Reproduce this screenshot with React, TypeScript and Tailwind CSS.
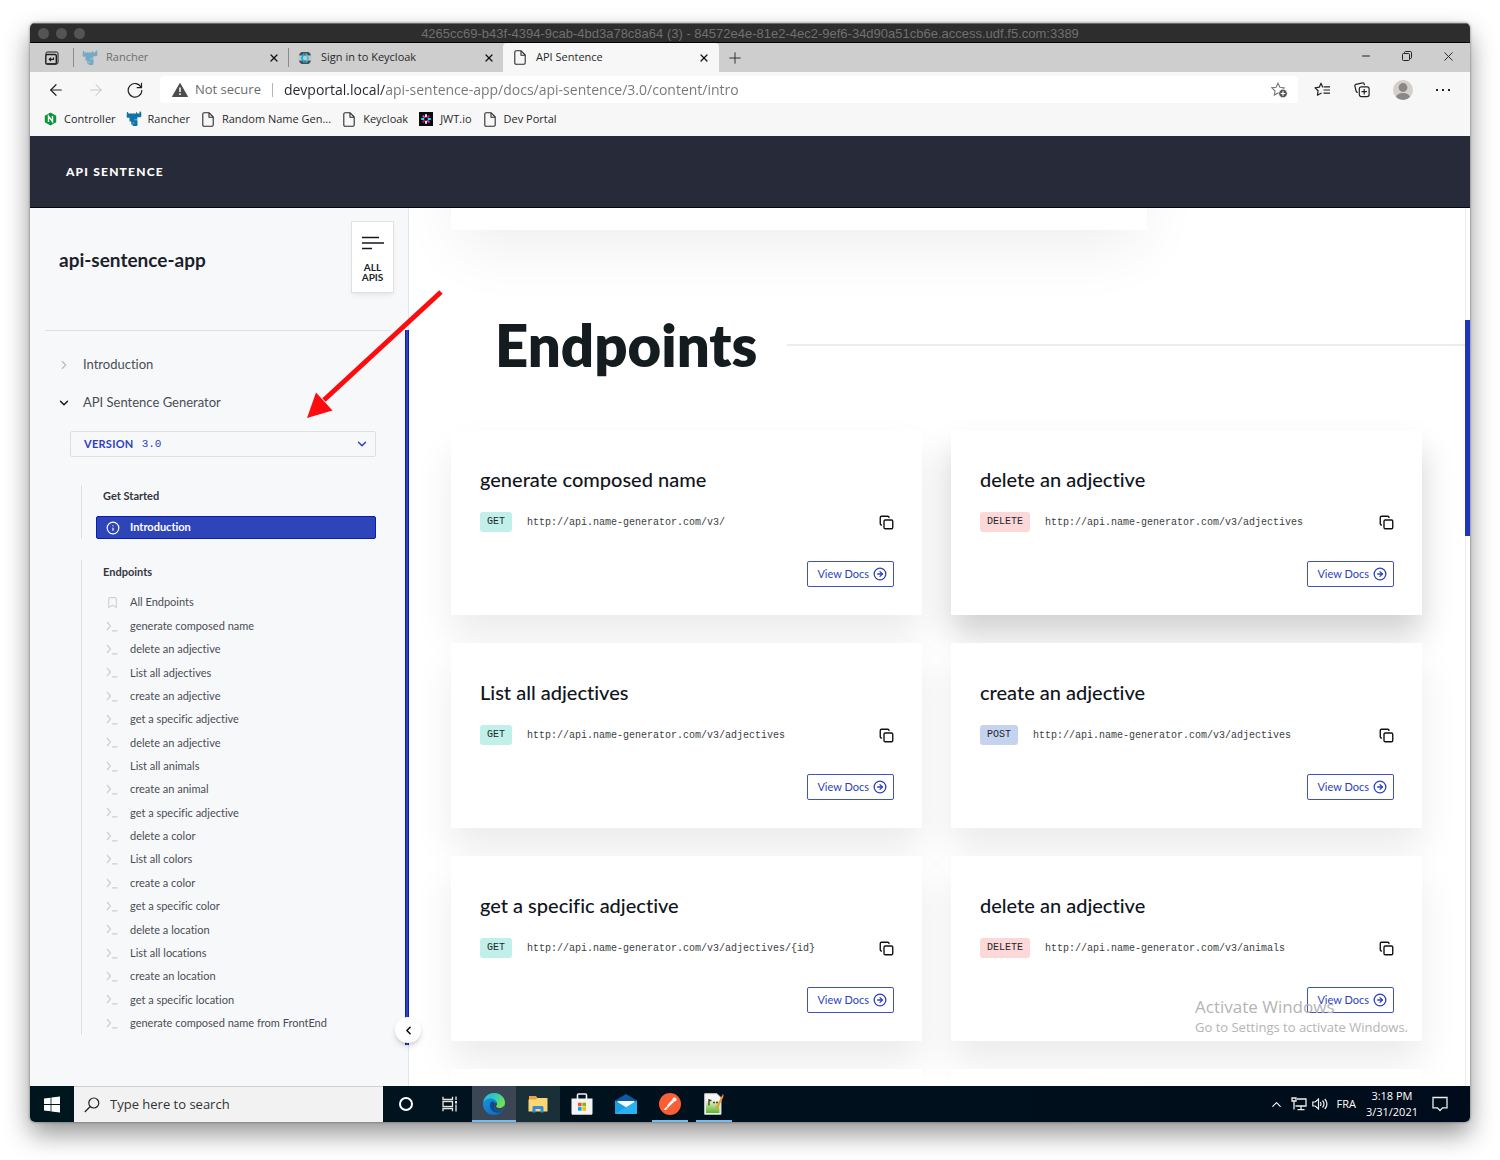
import type { ReactNode } from "react";
import {
  ArrowLeft,
  ArrowRight,
  Bookmark,
  ChevronDown,
  ChevronLeft,
  ChevronRight,
  ChevronUp,
  CircleArrowRight,
  Copy,
  Info,
  Minus,
  Plus,
  X,
} from "lucide-react";

const UI = "font-['Open_Sans','Noto_Sans',sans-serif]";
const LATO = "font-['Lato',sans-serif] [font-variant-ligatures:none]";
const MONO = "font-['Liberation_Mono',monospace]";

/* ---------- small drawings ---------- */

function RancherIcon({ color }: { color: string }) {
  return (
    <svg width="16" height="16" viewBox="0 0 16 16" aria-hidden="true">
      <g fill={color}>
        <path d="M1 1h1l.4 1.400H10V1.200h.9l.4 1.300h2L13.700.500h1l.6 1.200v3.500l-.8 1h-3.200v4.300H3.500V6.800H1.300L.6 6z" />
        <path d="M5.200 10h6.300v4.200l-.7.800H6.900l-.5-1.600H5.200z" />
      </g>
      <path d="M8.200 8.800h2.800M6.200 12h2.400" stroke="#fff" strokeOpacity=".55" strokeWidth=".8" />
    </svg>
  );
}

function PageIcon() {
  return (
    <svg width="12" height="15" viewBox="0 0 12 15" fill="none" stroke="#2b2b2b" strokeWidth="1.1" strokeLinejoin="round" aria-hidden="true">
      <path d="M2 .8h5.2L11.2 5v8c0 .7-.4 1.2-1.2 1.2H2c-.8 0-1.2-.5-1.2-1.2V2C.8 1.300 1.200.8 2 .8z" />
      <path d="M7 1v4.200h4" />
    </svg>
  );
}

function KeycloakIcon() {
  return (
    <svg width="14" height="14" viewBox="0 0 14 14" aria-hidden="true">
      <path d="M3.300 1h7.400l2 2v8l-2 2H3.300l-2-2V3z" fill="#4b5055" />
      <path d="M0 4.500h14v5H0z" fill="#c4c8ca" />
      <path d="M5.200 2.500h1.800L4.700 7l2.300 4.500H5.200L2.700 7z" fill="#00b8e3" />
      <path d="M8.800 2.500H7L9.300 7 7 11.500h1.800L11.300 7z" fill="#33c6e9" />
    </svg>
  );
}

function NginxIcon() {
  return (
    <svg width="13" height="14" viewBox="0 0 13 14" aria-hidden="true">
      <path d="M6.500.5l5.700 3.200v6.600l-5.700 3.200L.8 10.300V3.700z" fill="#079639" />
      <path d="M4.500 10V4.200l4 5.500V4" fill="none" stroke="#fff" strokeWidth="1.400" />
    </svg>
  );
}

function JwtIcon() {
  const colors = ["#fff", "#fb015b", "#00f2e6", "#d63aff", "#fff", "#fb015b", "#00f2e6", "#d63aff"];
  return (
    <svg width="14" height="14" viewBox="0 0 14 14" aria-hidden="true">
      <rect width="14" height="14" fill="#0b0b0b" />
      {colors.map((c, i) => (
        <path key={i} d="M7 5.200V2.200" stroke={c} strokeWidth="1.800" transform={`rotate(${i * 45} 7 7)`} />
      ))}
    </svg>
  );
}

function TabActionsIcon() {
  return (
    <svg width="14" height="14" viewBox="0 0 14 14" fill="none" stroke="#1d1d1d" aria-hidden="true">
      <path d="M1 3.500V2.200C1 1.500 1.500 1 2.200 1h9.600c.7 0 1.200.5 1.200 1.200v9.600c0 .7-.5 1.200-1.200 1.200H2.500" />
      <rect x=".8" y="3.500" width="10.500" height="9.500" rx="1.200" strokeWidth="1.400" />
      <path d="M8.500 6.500v1.800h-4M6 6.600L4.300 8.300 6 10" strokeWidth="1.200" />
    </svg>
  );
}

function ReloadIcon() {
  return (
    <svg width="16" height="16" viewBox="0 0 16 16" fill="none" stroke="#222" strokeWidth="1.200" aria-hidden="true">
      <path d="M14.200 5.500A6.800 6.800 0 1 0 14.800 8" />
      <path d="M14.500.8v4.900H9.700" />
    </svg>
  );
}

function WarningIcon() {
  return (
    <svg width="16" height="14" viewBox="0 0 16 14" aria-hidden="true">
      <path d="M8 .5l7.500 13H.5z" fill="#4d4d4d" stroke="#4d4d4d" strokeLinejoin="round" />
      <path d="M8 4.500v4.500M8 10.300v1.600" stroke="#fff" strokeWidth="1.500" />
    </svg>
  );
}

function StarAddIcon() {
  return (
    <svg width="17" height="16" viewBox="0 0 17 16" aria-hidden="true">
      <path d="M7 1.200l1.900 4 4.200.6-3.100 3 .7 4.300L7 11l-3.700 2.100L4 8.800.9 5.800l4.200-.6z" fill="none" stroke="#777" strokeWidth="1.100" />
      <circle cx="12" cy="11.500" r="4.300" fill="#555" stroke="#fff" strokeWidth=".8" />
      <path d="M12 9.200v4.600M9.700 11.500h4.600" stroke="#fff" strokeWidth="1.200" />
    </svg>
  );
}

function FavoritesIcon() {
  return (
    <svg width="17" height="15" viewBox="0 0 17 15" fill="none" stroke="#222" strokeWidth="1.200" aria-hidden="true">
      <path d="M9.500 5L8.600 5 7 1.200 5.300 5.200 1 5.800l3.100 3-.7 4.400L7.500 11" strokeLinejoin="round" />
      <path d="M10 4.800h6M9.500 8h6.500M9.500 11.200h6.500" />
    </svg>
  );
}

function CollectionsIcon() {
  return (
    <svg width="16" height="16" viewBox="0 0 16 16" fill="none" stroke="#222" strokeWidth="1.200" aria-hidden="true">
      <path d="M3.800 10.500c-.9 0-1.500-.6-1.700-1.500L.9 4.100c-.2-.9.300-1.600 1.100-1.800L8.500.9c.8-.2 1.500.2 1.700 1.100l.3 1.200" />
      <rect x="5.300" y="4.800" width="9.800" height="9.800" rx="2" />
      <path d="M10.200 7v5.400M7.500 9.700h5.400" />
    </svg>
  );
}

function ProfileIcon() {
  return (
    <svg width="20" height="20" viewBox="0 0 20 20" aria-hidden="true">
      <defs>
        <clipPath id="profile-disc">
          <circle cx="10" cy="10" r="10" />
        </clipPath>
      </defs>
      <circle cx="10" cy="10" r="10" fill="#d2cfcc" />
      <g clipPath="url(#profile-disc)" fill="#8a8785">
        <circle cx="10" cy="7.500" r="4.400" />
        <ellipse cx="10" cy="17.500" rx="7" ry="4.500" />
      </g>
    </svg>
  );
}

function RestoreIcon() {
  return (
    <svg width="10" height="10" viewBox="0 0 10 10" fill="none" stroke="#222" aria-hidden="true">
      <rect x=".5" y="2.500" width="7" height="7" rx="1" />
      <path d="M2.500 2.500v-1c0-.6.4-1 1-1h5c.6 0 1 .4 1 1v5c0 .6-.4 1-1 1h-1" />
    </svg>
  );
}

function WindowsIcon() {
  return (
    <svg width="16" height="17" viewBox="0 0 16 17" fill="#fff" aria-hidden="true">
      <path d="M0 2.600l6.600-.9v6.400H0zM7.400 1.600L16 .4v7.700H7.400zM0 8.900h6.600v6.400L0 14.400zM7.400 8.900H16v7.700l-8.600-1.200z" />
    </svg>
  );
}

function SearchIcon() {
  return (
    <svg width="16" height="16" viewBox="0 0 16 16" fill="none" stroke="#222" strokeWidth="1.200" aria-hidden="true">
      <circle cx="9.800" cy="6" r="5" />
      <path d="M6.200 9.500L.8 15" />
    </svg>
  );
}

function TaskViewIcon() {
  return (
    <svg width="16" height="16" viewBox="0 0 16 16" fill="none" stroke="#e6e6e6" strokeWidth="1.300" aria-hidden="true">
      <path d="M1 .8v2.700h9.500V.8M1 15.200v-2.700h9.500v2.700" />
      <rect x="1" y="5.500" width="9.500" height="5" />
      <path d="M14 .5v3.500M14 8.500v7" />
      <rect x="13" y="5" width="2" height="2.500" fill="#e6e6e6" stroke="none" />
    </svg>
  );
}

function EdgeIcon() {
  return (
    <svg width="22" height="22" viewBox="0 0 22 22" aria-hidden="true">
      <defs>
        <linearGradient id="edge-top" x1="0" y1="0" x2="1" y2=".5">
          <stop offset="0" stopColor="#22b5e6" />
          <stop offset=".5" stopColor="#2fc9c4" />
          <stop offset="1" stopColor="#72e04f" />
        </linearGradient>
        <linearGradient id="edge-body" x1="0" y1="0" x2="1" y2="1">
          <stop offset="0" stopColor="#1a9be0" />
          <stop offset="1" stopColor="#0d5fb3" />
        </linearGradient>
      </defs>
      <circle cx="11" cy="11" r="11" fill="url(#edge-body)" />
      <path d="M.3 9C1.300 3.500 5.800 0 11 0c6.300 0 11 4.500 11 9.700 0 3.300-2.600 5.300-5.300 5.300-2.300 0-3.700-.8-3.700-1.800 0-.7 1-1 1-2.800 0-2.600-2.800-5-6.400-5C4.200 5.400 1.500 6.800.3 9z" fill="url(#edge-top)" />
      <path d="M8.800 8.500C5.500 10.500 6 18.500 13.500 19.500c2.700.3 5-.5 6.400-2-2.700 1.300-5.700.8-7.400-.7-2.600-2.300-1.300-5-.6-6.400-.6-1.400-2-2.100-3.100-1.900z" fill="#0b4c96" />
      <path d="M12.600 10c.9 0 1.400.6 1.400 1.200 0 .8-1 1-1 2 0 1 1.400 1.800 3.700 1.800 1.800 0 3.600-.9 4.600-2.600-.3 2-1 3.600-1.800 4.800-2.500 1-5.300.6-7-.9-2.200-1.900-1.800-4.500-.9-5.800z" fill="#3a4653" />
    </svg>
  );
}

function ExplorerIcon() {
  return (
    <svg width="20" height="18" viewBox="0 0 20 18" aria-hidden="true">
      <path d="M1 1h7l1.500 2H19v13H1z" fill="#e8a63a" />
      <path d="M.5 4.500H8L9.500 3h10v13.500H.5z" fill="#fcd575" />
      <path d="M4.500 17.500v-5c0-.8.600-1.500 1.500-1.500h8c.9 0 1.500.7 1.500 1.500v5h-3V14h-5v3.500z" fill="#2f8fd6" />
    </svg>
  );
}

function StoreIcon() {
  return (
    <svg width="22" height="22" viewBox="0 0 22 22" aria-hidden="true">
      <path d="M6.500 6V2c0-.6.400-1 1-1h7c.6 0 1 .4 1 1v4" fill="none" stroke="#f4f4f4" strokeWidth="1.600" />
      <path d="M.5 5.500h21v14.700c0 1-.6 1.600-1.600 1.600H2.100c-1 0-1.600-.6-1.600-1.600z" fill="#f4f4f4" />
      <path d="M7 9.700h3.600v3.600H7z" fill="#f25022" />
      <path d="M11.400 9.700H15v3.600h-3.600z" fill="#7fba00" />
      <path d="M7 14.100h3.600v3.600H7z" fill="#00a4ef" />
      <path d="M11.400 14.100H15v3.600h-3.600z" fill="#ffb900" />
    </svg>
  );
}

function MailIcon() {
  return (
    <svg width="22" height="20" viewBox="0 0 22 20" aria-hidden="true">
      <path d="M0 6.500L11 0l11 6.500V9H0z" fill="#0c59a4" />
      <path d="M2.500 7h17v7h-17z" fill="#f5f7fa" />
      <path d="M0 6.500l11 6.800V20H1c-.6 0-1-.4-1-1z" fill="#1b9de2" />
      <path d="M22 6.500L6.500 16 0 19.800l1 .2h20c.6 0 1-.4 1-1z" fill="#28b3f0" />
    </svg>
  );
}

function PostmanIcon() {
  return (
    <svg width="22" height="22" viewBox="0 0 22 22" aria-hidden="true">
      <circle cx="11" cy="11" r="11" fill="#fb5d35" />
      <path d="M13.200 6.800l2 2-5.800 5.400-1.600-1.500z" fill="#fff" />
      <circle cx="15.500" cy="6.500" r="2.100" fill="#fff" />
      <path d="M8.500 13.300L5.300 16.500l2.300-.4M5.300 16.500l4-2.200" stroke="#fff" strokeWidth="1" fill="none" />
    </svg>
  );
}

function NotepadIcon() {
  return (
    <svg width="20" height="22" viewBox="0 0 20 22" aria-hidden="true">
      <defs>
        <linearGradient id="notepad-fade" x1="0" y1="0" x2="0" y2="1">
          <stop offset="0" stopColor="#e9f5c8" />
          <stop offset="1" stopColor="#5cb531" />
        </linearGradient>
      </defs>
      <path d="M.7.7H13l4 4v16.600H.7z" fill="#f7f7f7" stroke="#cfcfcf" />
      <path d="M2 7.500h13.500V20H2z" fill="url(#notepad-fade)" />
      <path d="M5 6v6.500M5 7.500h2.500M9 9.500h2M12 9.500h2" stroke="#444" strokeWidth="1.400" fill="none" />
      <path d="M18 2.500l1.500 1-5.500 11.500-2.200 1.500.4-2.800z" fill="#ef9a2d" />
      <path d="M18.300 1l1.700 1-.6 1.500-1.600-1z" fill="#c64b4b" />
    </svg>
  );
}

function NetworkIcon() {
  return (
    <svg width="16" height="14" viewBox="0 0 16 14" fill="none" stroke="#eee" strokeWidth="1.300" aria-hidden="true">
      <path d="M6 2h9v7H4.500M10 9v3.500M6.500 12.700h7" />
      <path d="M1 1h4v3H1zM3 4v8.500" />
    </svg>
  );
}

function VolumeIcon() {
  return (
    <svg width="16" height="14" viewBox="0 0 16 14" fill="none" stroke="#eee" strokeWidth="1.200" aria-hidden="true">
      <path d="M.8 5h2.400L6.500 2v10L3.200 9H.8z" />
      <path d="M8.300 5c.8 1.200.8 2.800 0 4M10.500 3.500c1.700 2 1.700 5 0 7M12.800 2c2.600 3 2.600 7 0 10" />
    </svg>
  );
}

function NotificationIcon() {
  return (
    <svg width="16" height="16" viewBox="0 0 16 16" fill="none" stroke="#eee" strokeWidth="1.300" aria-hidden="true">
      <path d="M1 1.500h14v10.300h-4.500L8 14.500l-2.500-2.700H1z" />
    </svg>
  );
}

function PromptIcon() {
  return (
    <svg width="12" height="11" viewBox="0 0 12 11" fill="none" stroke="#cdcfd4" strokeWidth="1.200" aria-hidden="true">
      <path d="M1 1l3.500 4L1 9M6 9.800h5.500" />
    </svg>
  );
}

/* ---------- browser chrome ---------- */

function CloseTab({ name }: { name: string }) {
  return (
    <button type="button" aria-label={`Close ${name}`} className="flex size-4 items-center justify-center">
      <X size={12} strokeWidth={2.5} color="#111" />
    </button>
  );
}

function BrowserTab({ icon, title, muted }: { icon: ReactNode; title: string; muted?: boolean }) {
  return (
    <div className="my-[5px] flex w-[215px] items-center border-l border-[#8b8b8b] pr-1.5 pl-2">
      <span className="flex w-4 justify-center">{icon}</span>
      <span className={`ml-2 flex-1 ${muted ? "text-[#6d6d6d]" : "text-[#2a2a2a]"}`}>{title}</span>
      <CloseTab name={title} />
    </div>
  );
}

function TabStrip() {
  return (
    <div className={`flex h-[29px] shrink-0 bg-[#cecece] text-[11px] ${UI}`}>
      <button type="button" aria-label="Tab actions" className="flex w-[43px] items-center justify-center">
        <TabActionsIcon />
      </button>
      <BrowserTab icon={<span className="opacity-60"><RancherIcon color="#3a93bd" /></span>} title="Rancher" muted />
      <BrowserTab icon={<KeycloakIcon />} title="Sign in to Keycloak" />
      <div className="flex w-[216px] items-center rounded-t-sm bg-[#f7f7f7] pr-[7px] pl-[9px] text-[#2a2a2a]">
        <span className="flex w-4 justify-center">
          <PageIcon />
        </span>
        <span className="ml-2 flex-1">API Sentence</span>
        <CloseTab name="API Sentence" />
      </div>
      <button type="button" aria-label="New tab" className="flex w-8 items-center justify-center">
        <Plus size={18} strokeWidth={1.2} color="#222" />
      </button>
      <div className="ml-auto flex items-center gap-[25px] pr-3.5 pb-[3px]">
        <button type="button" aria-label="Minimize" className="flex w-4 justify-center">
          <Minus size={12} strokeWidth={2} color="#222" />
        </button>
        <button type="button" aria-label="Restore" className="flex w-4 justify-center">
          <RestoreIcon />
        </button>
        <button type="button" aria-label="Close window" className="flex w-4 justify-center">
          <X size={15} strokeWidth={1.5} color="#222" />
        </button>
      </div>
    </div>
  );
}

function Toolbar() {
  return (
    <div className={`flex h-[35px] shrink-0 items-center bg-[#f7f7f7] pr-5 text-[13px] ${UI}`}>
      <div className="flex w-[130px] items-center gap-[22px] pl-[17px]">
        <button type="button" aria-label="Back">
          <ArrowLeft size={18} strokeWidth={1.6} color="#222" />
        </button>
        <button type="button" aria-label="Forward" disabled>
          <ArrowRight size={18} strokeWidth={1.4} color="#c8c8c8" />
        </button>
        <button type="button" aria-label="Reload">
          <ReloadIcon />
        </button>
      </div>
      <div className="flex h-[27px] flex-1 items-center rounded bg-white pr-2.5 pl-3">
        <WarningIcon />
        <span className="ml-[7px] text-[#6b6b6b]">Not secure</span>
        <span className="mx-[11px] h-3.5 w-px bg-[#b5b5b5]" />
        <input
          aria-label="Address"
          defaultValue="devportal.local/api-sentence-app/docs/api-sentence/3.0/content/intro"
          className="min-w-0 flex-1 bg-[linear-gradient(90deg,#24242c_101px,#757575_101px)] bg-clip-text text-[14px] text-transparent outline-none"
        />
        <button type="button" aria-label="Add to favorites">
          <StarAddIcon />
        </button>
      </div>
      <div className="ml-4 flex items-center gap-[23px]">
        <button type="button" aria-label="Favorites">
          <FavoritesIcon />
        </button>
        <button type="button" aria-label="Collections">
          <CollectionsIcon />
        </button>
        <button type="button" aria-label="Profile">
          <ProfileIcon />
        </button>
        <button type="button" aria-label="Settings and more" className="flex w-3.5 justify-between">
          <span className="size-[2px] bg-[#222]" />
          <span className="size-[2px] bg-[#222]" />
          <span className="size-[2px] bg-[#222]" />
        </button>
      </div>
    </div>
  );
}

const bookmarks: { label: string; icon: ReactNode }[] = [
  { label: "Controller", icon: <NginxIcon /> },
  { label: "Rancher", icon: <RancherIcon color="#0d73a8" /> },
  { label: "Random Name Gen...", icon: <PageIcon /> },
  { label: "Keycloak", icon: <PageIcon /> },
  { label: "JWT.io", icon: <JwtIcon /> },
  { label: "Dev Portal", icon: <PageIcon /> },
];

function BookmarksBar() {
  return (
    <nav aria-label="Bookmarks" className={`flex h-[29px] shrink-0 items-center gap-2.5 bg-[#f7f7f7] pb-[5px] pl-3 text-[11px] text-[#2a2a2a] ${UI}`}>
      {bookmarks.map((b) => (
        <a key={b.label} href="#" className="flex items-center gap-1.5">
          <span className="flex w-4 justify-center">{b.icon}</span>
          {b.label}
        </a>
      ))}
    </nav>
  );
}

/* ---------- portal ---------- */

const endpoints = [
  "generate composed name",
  "delete an adjective",
  "List all adjectives",
  "create an adjective",
  "get a specific adjective",
  "delete an adjective",
  "List all animals",
  "create an animal",
  "get a specific adjective",
  "delete a color",
  "List all colors",
  "create a color",
  "get a specific color",
  "delete a location",
  "List all locations",
  "create an location",
  "get a specific location",
  "generate composed name from FrontEnd",
];

function Sidebar() {
  return (
    <aside className={`relative flex w-[379px] shrink-0 flex-col border-r border-[#e3e5e8] bg-[#f7f8fa] ${LATO}`}>
      <div className="ml-[15px] mr-[17px] flex h-[123px] items-start justify-between border-b border-[#dddfe2] pl-3.5 pt-[13px]">
        <h2 className="mt-[25px] text-[19px] leading-7 font-bold text-[#1c1f2b]">api-sentence-app</h2>
        <button
          type="button"
          className="-mr-[3px] flex h-[72px] w-[43px] flex-col items-center border border-[#e1e1e4] bg-white pt-3.5 text-[10px] leading-[10px] font-bold text-[#1c1f2b] shadow-md shadow-black/5"
        >
          <svg width="22" height="14" viewBox="0 0 22 14" stroke="#16181f" strokeWidth="1.500" aria-hidden="true">
            <path d="M0 1.500h17M0 7h22M0 12.500h10" />
          </svg>
          <span className="mt-3">ALL</span>
          <span>APIS</span>
        </button>
      </div>

      <div className="flex flex-1 flex-col pr-[32px] pb-[51px] text-[11px] text-[#4a4d55]">
        <nav aria-label="Documents" className="mt-[15px] text-[13px]">
          <a href="#" className="flex h-[38px] items-center gap-3 pl-[27px]">
            <ChevronRight size={14} strokeWidth={2} color="#b9bbc0" />
            Introduction
          </a>
          <a href="#" className="flex h-[38px] items-center gap-3 pl-[27px]">
            <ChevronDown size={14} strokeWidth={2.500} color="#16181f" />
            API Sentence Generator
          </a>
        </nav>

        <div className="mt-[9px] ml-10 flex h-[26px] items-center rounded-xs border border-[#dedfe3] pr-1.5 pl-[13px] text-[#2b3fc0]">
          <label htmlFor="version" className="font-bold tracking-wide">
            VERSION
          </label>
          <select id="version" className={`ml-2 flex-1 appearance-none ${MONO}`}>
            <option>3.0</option>
          </select>
          <ChevronDown size={14} strokeWidth={2.500} aria-hidden="true" />
        </div>

        <section className="mt-7 ml-[51px] border-l border-[#dddfe3] pl-3.5">
          <h3 className="pt-px pl-[7px] leading-5 font-bold text-[#33363f]">Get Started</h3>
          <a href="#" className="mt-[10px] flex h-[23px] items-center gap-2.5 rounded-xs border border-[#0a1cb5] bg-[#2d45b9] pl-[9px] font-bold text-white">
            <Info size={14} strokeWidth={2} />
            Introduction
          </a>
        </section>

        <section className="mt-[21px] ml-[51px] flex flex-1 flex-col border-l border-[#dddfe3] pl-3.5">
          <h3 className="pt-0.5 pl-[7px] leading-5 font-bold text-[#33363f]">Endpoints</h3>
          <ul className="mt-[9px] grid flex-1 auto-rows-fr pl-2.5">
            <li className="flex items-center">
              <a href="#" className="flex items-center gap-[11px]">
                <Bookmark size={13} strokeWidth={2} color="#cdcfd4" />
                All Endpoints
              </a>
            </li>
            {endpoints.map((name, i) => (
              <li key={i} className="flex items-center">
                <a href="#" className="flex items-center gap-[11px]">
                  <span className="flex w-[13px]">
                    <PromptIcon />
                  </span>
                  {name}
                </a>
              </li>
            ))}
          </ul>
        </section>
      </div>

      <div className="absolute top-[122px] -right-px bottom-[41px] w-1 border-x border-[#0a1cb5] bg-[#2d45b9]" />
      <button
        type="button"
        aria-label="Collapse sidebar"
        className="absolute -right-[13px] bottom-[43px] z-10 flex size-[26px] items-center justify-center rounded-full bg-white shadow-md shadow-black/15"
      >
        <ChevronLeft size={13} strokeWidth={3} color="#111" />
      </button>
    </aside>
  );
}

type Method = "GET" | "DELETE" | "POST";

const methodColor: Record<Method, string> = {
  GET: "bg-[#c1f0ea]",
  DELETE: "bg-[#fdd8d9]",
  POST: "bg-[#c5d3ee]",
};

const cards: { title: string; method: Method; path: string; raised?: boolean }[] = [
  { title: "generate composed name", method: "GET", path: "/v3/" },
  { title: "delete an adjective", method: "DELETE", path: "/v3/adjectives", raised: true },
  { title: "List all adjectives", method: "GET", path: "/v3/adjectives" },
  { title: "create an adjective", method: "POST", path: "/v3/adjectives" },
  { title: "get a specific adjective", method: "GET", path: "/v3/adjectives/{id}" },
  { title: "delete an adjective", method: "DELETE", path: "/v3/animals" },
];

function EndpointCard({ title, method, path, raised }: (typeof cards)[number]) {
  const shadow = raised
    ? "shadow-[0_20px_30px_0_rgba(0,0,0,0.18)]"
    : "shadow-[0_22px_36px_0_rgba(0,0,0,0.08)]";
  return (
    <article className={`bg-white pt-[35px] pr-7 pb-7 pl-[29px] ${shadow}`}>
      <h3 className="text-[20px] leading-7 font-medium text-[#11151c]">{title}</h3>
      <div className={`mt-[19px] flex h-5 items-center text-[10px] text-[#3a3d42] ${MONO}`}>
        <span className={`rounded-[3px] px-[7px] leading-5 text-[#22262b] ${methodColor[method]}`}>{method}</span>
        <span className="ml-[15px]">http://api.name-generator.com{path}</span>
        <button type="button" aria-label={`Copy URL of ${title}`} className="ml-auto">
          <Copy size={15} strokeWidth={2.2} color="#111" />
        </button>
      </div>
      <div className="mt-[29px] flex justify-end">
        <a href="#" className="flex h-[26px] items-center gap-1 rounded-xs border border-[#4052c6] pr-1.5 pl-[9px] text-[11px] text-[#2b3fc0]">
          View Docs
          <CircleArrowRight size={14} strokeWidth={2.2} />
        </a>
      </div>
    </article>
  );
}

function MainContent() {
  return (
    <main className={`relative flex min-w-0 flex-1 overflow-hidden bg-white ${LATO}`}>
      <div className="min-w-0 flex-1 pl-[42px]">
        <div className="-mt-[178px] mr-[318px] h-[200px] bg-white shadow-[0_24px_60px_-8px_rgba(0,0,0,0.07)]" />
        <div className="mt-[85px] flex items-center gap-[30px] pl-11">
          <h1 className="text-[58px] leading-[60px] font-extrabold text-[#151c20]">Endpoints</h1>
          <span className="h-[2px] flex-1 bg-[#ececec]" />
        </div>
        <div className="mt-[55px] mr-[43px] grid grid-cols-2 gap-x-[29px] gap-y-7">
          {cards.map((card, i) => (
            <EndpointCard key={i} {...card} />
          ))}
          <div className="h-10 bg-white" />
          <div className="h-10 bg-white" />
        </div>
      </div>
      <div className="w-[5px] border-l border-[#eeeeee] pt-28">
        <div className="-ml-px h-[216px] bg-[#1f33bd]" />
      </div>
      <div className={`pointer-events-none absolute right-[62px] bottom-[51px] text-[#b4b4b4] ${UI}`}>
        <p className="text-[17px] leading-6">Activate Windows</p>
        <p className="text-[13px] leading-4">Go to Settings to activate Windows.</p>
      </div>
    </main>
  );
}

/* ---------- taskbar ---------- */

const apps: { label: string; icon: ReactNode; cell: string; line: string }[] = [
  { label: "Cortana", icon: <span className="size-3.5 rounded-full border-2 border-white" />, cell: "", line: "" },
  { label: "Task View", icon: <TaskViewIcon />, cell: "", line: "" },
  { label: "Microsoft Edge", icon: <EdgeIcon />, cell: "bg-[#3a4653]", line: "w-full bg-[#76b9ed]" },
  { label: "File Explorer", icon: <ExplorerIcon />, cell: "bg-[#1a3038]", line: "" },
  { label: "Microsoft Store", icon: <StoreIcon />, cell: "", line: "" },
  { label: "Mail", icon: <MailIcon />, cell: "", line: "" },
  { label: "Postman", icon: <PostmanIcon />, cell: "", line: "w-9 bg-[#76b9ed]" },
  { label: "Notepad++", icon: <NotepadIcon />, cell: "", line: "w-9 bg-[#76b9ed]" },
];

function Taskbar() {
  return (
    <footer className={`flex h-9 shrink-0 items-center bg-linear-to-r from-[#00161f] to-[#000c1b] text-white ${UI}`}>
      <button type="button" aria-label="Start" className="flex w-11 items-center justify-center">
        <WindowsIcon />
      </button>
      <label className="flex h-9 w-[309px] items-center border-t border-[#cfcfcf] bg-[#f2f2f2] pl-2.5">
        <SearchIcon />
        <input
          aria-label="Search"
          placeholder="Type here to search"
          className="ml-2.5 min-w-0 flex-1 text-[13px] text-[#333] placeholder-[#333] outline-none"
        />
      </label>
      <div className="flex h-9 pl-px">
        {apps.map((app) => (
          <button key={app.label} type="button" aria-label={app.label} className={`flex w-11 flex-col items-center ${app.cell}`}>
            <span className="flex flex-1 items-center pt-0.5">{app.icon}</span>
            <span className={`h-0.5 ${app.line}`} />
          </button>
        ))}
      </div>
      <div className="ml-auto flex items-center pr-[22px] text-[11px]">
        <ChevronUp size={15} strokeWidth={1.800} />
        <span className="ml-[7px]">
          <NetworkIcon />
        </span>
        <span className="ml-[5px]">
          <VolumeIcon />
        </span>
        <span className="ml-2">FRA</span>
        <div className="ml-2.5 text-center leading-4">
          <p>3:18 PM</p>
          <p>3/31/2021</p>
        </div>
        <button type="button" aria-label="Notifications" className="ml-3.5">
          <NotificationIcon />
        </button>
      </div>
    </footer>
  );
}

export default function App() {
  return (
    <div className="flex h-screen flex-col bg-white px-[30px] pt-[23px] pb-[38px]">
      <div className="relative flex min-h-0 flex-1 flex-col rounded-[5px] shadow-[0_12px_26px_0_rgba(0,0,0,0.42),0_0_2px_1px_rgba(0,0,0,0.22)]">
        <div className="flex min-h-0 flex-1 flex-col overflow-hidden rounded-[5px]">
          <div className="flex h-5 shrink-0 items-center border-t border-b border-t-[#6a6a6a] border-b-black bg-[#2d2d2d] px-2">
            <div className="flex w-16 gap-[7px]">
              <span className="size-[11px] rounded-full bg-[#545454]" />
              <span className="size-[11px] rounded-full bg-[#545454]" />
              <span className="size-[11px] rounded-full bg-[#545454]" />
            </div>
            <p className="flex-1 pt-px pr-16 text-center font-['Liberation_Sans',sans-serif] text-[13px] leading-4 text-[#707070]">
              4265cc69-b43f-4394-9cab-4bd3a78c8a64 (3) - 84572e4e-81e2-4ec2-9ef6-34d90a51cb6e.access.udf.f5.com:3389
            </p>
          </div>
          <TabStrip />
          <Toolbar />
          <BookmarksBar />
          <header className={`flex h-[72px] shrink-0 items-center border-b border-[#07080c] bg-[#272a38] pl-9 ${LATO}`}>
            <a href="#" className="text-[12px] font-black tracking-widest text-white">
              API SENTENCE
            </a>
          </header>
          <div className="flex min-h-0 flex-1">
            <Sidebar />
            <MainContent />
          </div>
          <Taskbar />
        </div>
        <svg
          className="pointer-events-none absolute top-[266px] left-[276px]"
          width="138"
          height="131"
          viewBox="0 0 138 131"
          aria-hidden="true"
        >
          <path d="M135 3L18 111" stroke="#fd0b0f" strokeWidth="5" />
          <path d="M1 129L10 103.500L26.500 121.500z" fill="#fd0b0f" />
        </svg>
      </div>
    </div>
  );
}
